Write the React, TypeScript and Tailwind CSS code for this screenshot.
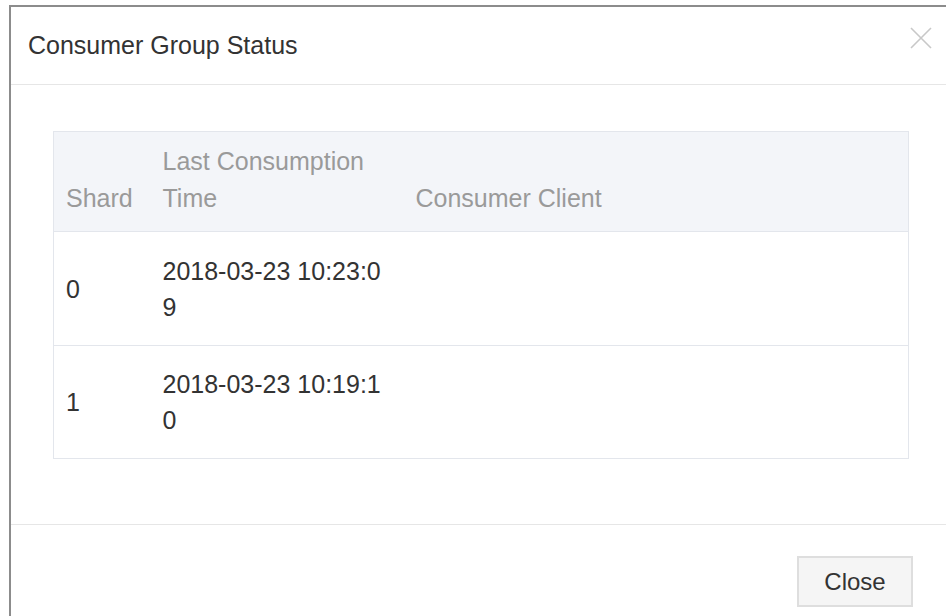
import React from "react";

type ShardRow = { shard: string; time: string; client: string };

const rows: ShardRow[] = [
  { shard: "0", time: "2018-03-23 10:23:09", client: "" },
  { shard: "1", time: "2018-03-23 10:19:10", client: "" },
];

function CloseIcon() {
  return (
    <svg width="22" height="22" viewBox="0 0 22 22" fill="none">
      <path d="M1 1L21 21M21 1L1 21" stroke="#c8c8c8" strokeWidth="1.6" />
    </svg>
  );
}

export default function App() {
  return (
    <div className="w-full h-[616px] bg-white overflow-hidden pl-[9px] pt-[5px] font-['Liberation_Sans',Arial,sans-serif]">
      <div className="h-[640px] border-l-2 border-t-2 border-[#8c8c8c] bg-white flex flex-col">
        {/* header */}
        <div className="h-[78px] flex items-center justify-between pl-[17px] pr-[14px] border-b border-[#e6e6e6]">
          <h2 className="text-[25px] text-[#333] leading-none">Consumer Group Status</h2>
          <button className="w-[22px] h-[22px] flex items-center justify-center self-start mt-[20px]">
            <CloseIcon />
          </button>
        </div>

        {/* body */}
        <div className="h-[440px] pt-[46px] pl-[42px] pr-[37px] border-b border-[#e6e6e6]">
          <table className="w-full border-collapse border border-[#e3e6ec] text-[25px] table-fixed">
            <colgroup>
              <col className="w-[97px]" />
              <col className="w-[253px]" />
              <col />
            </colgroup>
            <thead>
              <tr className="h-[100px] bg-[#f3f5f9] border-b border-[#e3e6ec]">
                <th className="px-3 text-left align-bottom pb-[14px] font-normal text-[#9a9a9a] leading-[37px]">Shard</th>
                <th className="px-3 text-left align-bottom pb-[14px] font-normal text-[#9a9a9a] leading-[37px]">Last Consumption Time</th>
                <th className="px-3 text-left align-bottom pb-[14px] font-normal text-[#9a9a9a] leading-[37px]">Consumer Client</th>
              </tr>
            </thead>
            <tbody>
              {rows.map((r, i) => (
                <tr key={r.shard} className={i === 0 ? "h-[114px] border-b border-[#e3e6ec]" : "h-[113px]"}>
                  <td className="px-3 text-[#333] leading-[36px] align-middle">{r.shard}</td>
                  <td className="px-3 text-[#333] leading-[36px] align-middle break-all">{r.time}</td>
                  <td className="px-3 text-[#333] leading-[36px] align-middle">{r.client}</td>
                </tr>
              ))}
            </tbody>
          </table>
        </div>

        {/* footer */}
        <div className="flex justify-end pt-[31px] pr-[33px]">
          <button className="w-[116px] h-[51px] bg-[#f5f5f5] border-2 border-[#dedede] text-[24px] text-[#333] leading-none">
            Close
          </button>
        </div>
      </div>
    </div>
  );
}
